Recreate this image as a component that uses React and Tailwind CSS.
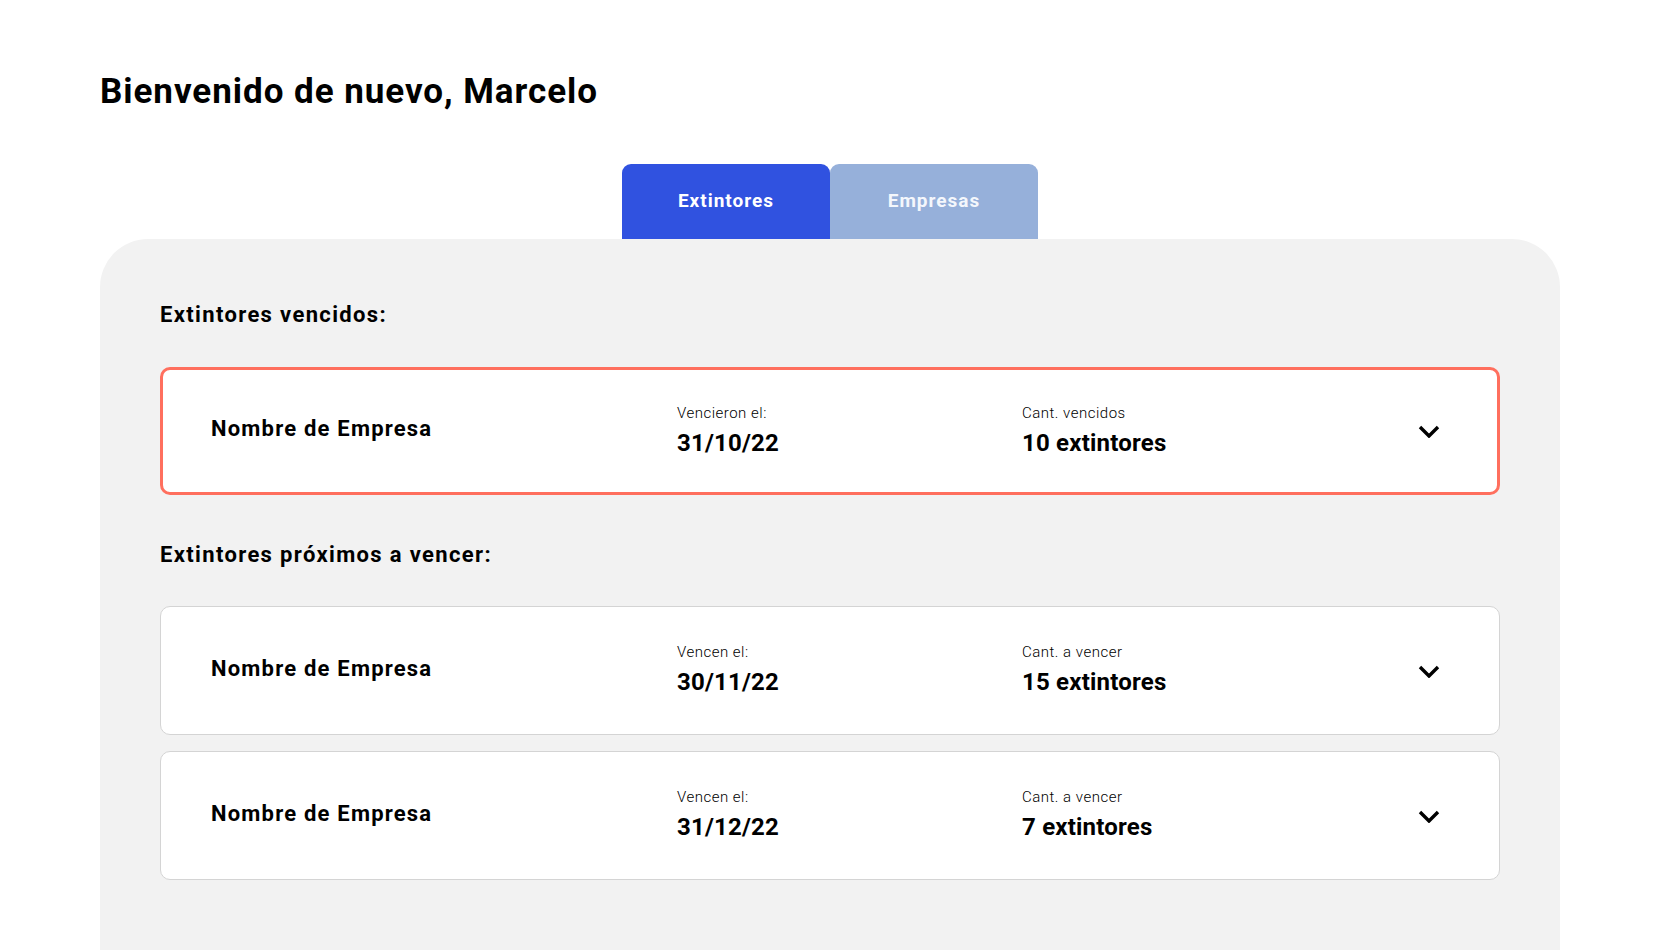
import { useState } from 'react';

const vencidos = [
  { empresa: 'Nombre de Empresa', fecha: '31/10/22', cantidad: '10 extintores' },
];

const proximos = [
  { empresa: 'Nombre de Empresa', fecha: '30/11/22', cantidad: '15 extintores' },
  { empresa: 'Nombre de Empresa', fecha: '31/12/22', cantidad: '7 extintores' },
];

function Chevron() {
  return (
    <svg width="22" height="13" viewBox="0 0 22 13" fill="none" stroke="currentColor">
      <path d="M2 2l9 9 9-9" strokeWidth={3.4} strokeLinejoin="miter" />
    </svg>
  );
}

function ExtintorCard({ item, expired }) {
  return (
    <div
      className={
        expired
          ? 'h-[128px] bg-white rounded-[10px] border-[3px] border-[#ff6f5e] flex items-center pl-[48px] pr-[57px] pb-[2px]'
          : 'h-[129px] bg-white rounded-[10px] border border-[#d4d4d4] flex items-center pl-[50px] pr-[59px] pb-[2px]'
      }
    >
      <div className="w-[466px] mb-[2px] text-[22px] leading-[22px] font-bold tracking-[1.2px]">{item.empresa}</div>
      <div className="w-[345px]">
        <div className="text-[15px] leading-[15px] font-light tracking-[0.5px]">{expired ? 'Vencieron el:' : 'Vencen el:'}</div>
        <div className="mt-[10px] text-[24px] leading-[24px] font-bold tracking-[0.2px]">{item.fecha}</div>
      </div>
      <div className="flex-1">
        <div className="text-[15px] leading-[15px] font-light tracking-[0.5px]">{expired ? 'Cant. vencidos' : 'Cant. a vencer'}</div>
        <div className="mt-[10px] text-[24px] leading-[24px] font-bold tracking-[0.2px]">{item.cantidad}</div>
      </div>
      <button className="mt-[3px] text-black" aria-label="Expandir">
        <Chevron />
      </button>
    </div>
  );
}

export default function App() {
  const [tab, setTab] = useState('extintores');

  return (
    <div className="h-[950px] overflow-hidden bg-white text-black font-['Roboto','Liberation_Sans',sans-serif] flex flex-col px-[100px]">
      <h1 className="pt-[74px] text-[35px] leading-[35px] font-bold tracking-[0.95px]">Bienvenido de nuevo, Marcelo</h1>

      <div className="mt-[55px] flex justify-center">
        <button
          onClick={() => setTab('extintores')}
          className={`w-[208px] h-[75px] rounded-t-[9px] text-[19px] font-bold tracking-[1px] ${tab === 'extintores' ? 'bg-[#3052e0] text-white' : 'bg-[#96b0da] text-[#f4f7fc]'}`}
        >
          Extintores
        </button>
        <button
          onClick={() => setTab('empresas')}
          className={`w-[208px] h-[75px] rounded-t-[9px] text-[19px] font-bold tracking-[1px] ${tab === 'empresas' ? 'bg-[#3052e0] text-white' : 'bg-[#96b0da] text-[#f4f7fc]'}`}
        >
          Empresas
        </button>
      </div>

      <div className="flex-1 bg-[#f2f2f2] rounded-t-[48px] px-[60px] pt-[65px]">
        <h2 className="text-[22px] leading-[22px] font-bold tracking-[1.35px]">Extintores vencidos:</h2>
        <div className="mt-[41px] flex flex-col gap-4">
          {vencidos.map((item, i) => (
            <ExtintorCard key={i} item={item} expired />
          ))}
        </div>

        <h2 className="mt-[49px] text-[22px] leading-[22px] font-bold tracking-[1.35px]">Extintores próximos a vencer:</h2>
        <div className="mt-[40px] flex flex-col gap-4">
          {proximos.map((item, i) => (
            <ExtintorCard key={i} item={item} />
          ))}
        </div>
      </div>
    </div>
  );
}
